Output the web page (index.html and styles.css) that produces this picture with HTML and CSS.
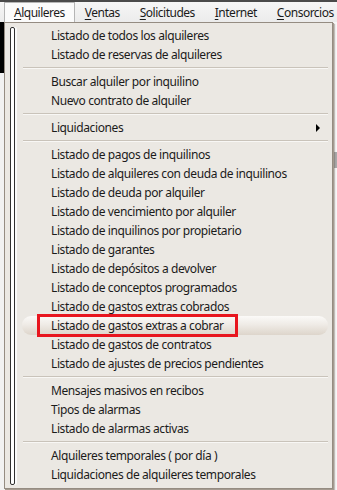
FILE: index.html
```html
<!DOCTYPE html>
<html lang="es">
<head>
    <meta charset="UTF-8">
    <title>Alquileres</title>
    <link rel="stylesheet" href="styles.css">
</head>
<body>

<div class="screen">
    <div class="topline"></div>
    <div class="menubar">
        <span class="bar-item open"><u>A</u>lquileres</span>
        <span class="bar-item"><u>V</u>entas</span>
        <span class="bar-item"><u>S</u>olicitudes</span>
        <span class="bar-item"><u>I</u>nternet</span>
        <span class="bar-item"><u>C</u>onsorcios</span>
    </div>

    <div class="backdrop">
        <div class="left-strip"></div>
        <div class="right-strip"><div class="scroll-thumb"></div></div>
    </div>

    <div class="popup">
        <div class="gutter"></div>
        <ul class="menu">
            <li>Listado de todos los alquileres</li>
            <li>Listado de reservas de alquileres</li>
            <li class="sep"></li>
            <li>Buscar alquiler por inquilino</li>
            <li>Nuevo contrato de alquiler</li>
            <li class="sep"></li>
            <li class="sub">Liquidaciones</li>
            <li class="sep"></li>
            <li>Listado de pagos de inquilinos</li>
            <li>Listado de alquileres con deuda de inquilinos</li>
            <li>Listado de deuda por alquiler</li>
            <li>Listado de vencimiento por alquiler</li>
            <li>Listado de inquilinos por propietario</li>
            <li>Listado de garantes</li>
            <li>Listado de depósitos a devolver</li>
            <li>Listado de conceptos programados</li>
            <li>Listado de gastos extras cobrados</li>
            <li class="hover"><span class="mark">Listado de gastos extras a cobrar</span></li>
            <li>Listado de gastos de contratos</li>
            <li>Listado de ajustes de precios pendientes</li>
            <li class="sep"></li>
            <li>Mensajes masivos en recibos</li>
            <li>Tipos de alarmas</li>
            <li>Listado de alarmas activas</li>
            <li class="sep"></li>
            <li>Alquileres temporales ( por día )</li>
            <li>Liquidaciones de alquileres temporales</li>
        </ul>
    </div>
</div>

</body>
</html>
```

FILE: styles.css
```css
body {
    margin: 0;
    padding: 0;
    font-family: "Noto Sans", "Open Sans", sans-serif;
    font-size: 12px;
    letter-spacing: -0.4px;
    color: #1b1b1b;
    background-color: #f2f2f2;
}

.screen {
    position: relative;
    width: 337px;
    height: 490px;
    overflow: hidden;
}

.topline {
    height: 2px;
    background-color: #4a4a4a;
}

.menubar {
    display: flex;
    height: 20px;
    padding-left: 4px;
    background: linear-gradient(#f6f6f6, #ececec);
    white-space: nowrap;
    letter-spacing: -0.5px;
}

.bar-item {
    padding: 1px 9px 0 9px;
    line-height: 18px;
    border: 1px solid transparent;
    border-bottom: none;
}

.bar-item.open {
    background-color: #fbfbfb;
    border-color: #b5b5b5;
}

.bar-item u {
    text-decoration-thickness: 1px;
    text-underline-offset: 2px;
}

/* what shows around the open menu */
.backdrop {
    display: flex;
    justify-content: space-between;
    height: 468px;
}

.left-strip {
    width: 4px;
    height: 51px;
    background-color: #000;
}

.right-strip {
    width: 3px;
    padding-top: 130px;
    background-color: #f7f7f7;
}

.scroll-thumb {
    height: 16px;
    background-color: #a9a9a9;
}

.popup {
    position: absolute;
    left: 4px;
    top: 22px;
    width: 327px;
    padding: 3px 0 4px 0;
    background-color: #ebe8e3;
    border: 1px solid #958c82;
    box-shadow: 1px 1px 0 #a49a8f, 2px 2px 1px rgba(90, 80, 70, 0.35);
}

.gutter {
    position: absolute;
    left: 5px;
    top: 4px;
    bottom: 3px;
    width: 3px;
    border: 1px solid #2f2f2f;
    border-radius: 2px;
    background-color: #fff;
    box-shadow: 2px 0 0 #fafafa;
}

.menu {
    list-style: none;
    margin: 0;
    padding: 0;
}

.menu li {
    position: relative;
    height: 19px;
    line-height: 19px;
    padding-left: 46px;
    white-space: nowrap;
}

.menu li.sep {
    height: 8px;
    margin: 0 4px 0 18px;
}

.menu li.sep::after {
    content: "";
    position: absolute;
    left: 0;
    right: 0;
    top: 3px;
    border-top: 1px solid #c9c3ba;
    border-bottom: 1px solid #f8f7f5;
}

.menu li.sub::after {
    content: "";
    position: absolute;
    right: 12px;
    top: 6px;
    border-left: 4px solid #000;
    border-top: 4px solid transparent;
    border-bottom: 4px solid transparent;
}

.menu li.hover {
    margin: 0 4px 0 17px;
    padding-left: 29px;
    border-radius: 9px;
    background: linear-gradient(#fbfaf8 0%, #efebe6 45%, #ddd5cb 100%);
}

.mark {
    display: inline-block;
    vertical-align: top;
    margin: -2px 0 0 -14px;
    padding: 0 11px;
    line-height: 17px;
    border: 3px solid #e8161f;
}
```
